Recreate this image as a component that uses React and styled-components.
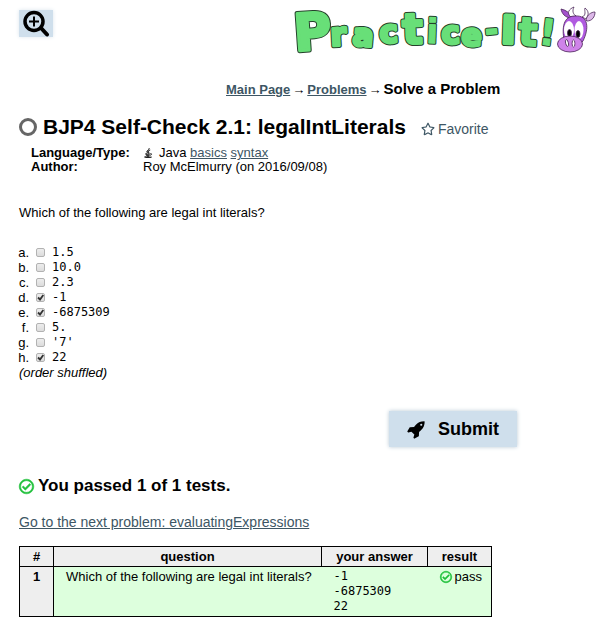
import React from "react";
import styled, { createGlobalStyle } from "styled-components";
import { FaRegStar, FaRegCheckCircle, FaJava } from "react-icons/fa";

const sans = `"Liberation Sans", Arial, sans-serif`;
const mono = `"DejaVu Sans Mono", monospace`;

const Global = createGlobalStyle`
  * { box-sizing: border-box; }
  body { margin: 0; background: #fff; color: #000; font: 13px/15px ${sans}; }
`;

const Page = styled.div`
  padding: 0 11px 20px 19px;
`;

const Header = styled.header`
  display: flex;
  justify-content: space-between;
  align-items: flex-start;
`;

const SearchButton = styled.button`
  display: flex;
  align-items: center;
  justify-content: center;
  width: 34px;
  height: 27px;
  margin-top: 10px;
  padding: 0;
  border: 0;
  background: #cfdfec;
  box-shadow: 0 0 4px #dce6ee;
`;

const Logo = styled.svg`
  display: block;
  width: 304px;
  height: 64px;
  flex: none;
  overflow: visible;
`;

const LogoText = styled.text`
  font: bold ${(p) => p.$size}px "DejaVu Sans", sans-serif;
  fill: #68df78;
  stroke: ${(p) => (p.$outline ? "#24402a" : "#68df78")};
  stroke-width: ${(p) => (p.$outline ? p.$fat + 2 : p.$fat)}px;
  stroke-linejoin: round;
`;

const Crumbs = styled.nav`
  display: flex;
  align-items: baseline;
  gap: 2px;
  margin: 16px 0 0 207px;
  line-height: 18px;
  font-weight: bold;
  white-space: nowrap;
`;

const Arrow = styled.span`
  font-weight: normal;
`;

const Current = styled.span`
  font-size: 15px;
`;

const Link = styled.a`
  color: #3d5664;
  text-decoration: underline;
  font-size: ${(p) => p.$size || "inherit"};
`;

const TitleRow = styled.div`
  display: flex;
  align-items: center;
  margin-top: 15px;
  white-space: nowrap;
`;

const Ring = styled.span`
  width: 18px;
  height: 18px;
  margin-right: 6px;
  border: 3px solid #666;
  border-radius: 50%;
`;

const Title = styled.h1`
  margin: 0;
  font-size: 21px;
  line-height: 26px;
`;

const Favorite = styled.button`
  display: flex;
  align-items: center;
  gap: 3px;
  margin: 4px 0 0 15px;
  padding: 0;
  border: 0;
  background: none;
  color: #3d5664;
  font: 14px/18px ${sans};
`;

const Facts = styled.dl`
  display: grid;
  grid-template-columns: 112px 1fr;
  line-height: 14px;
  margin: 6px 0 0 12px;
`;

const Term = styled.dt`
  font-weight: bold;
`;

const Fact = styled.dd`
  margin: 0;
  svg { margin-right: 6px; vertical-align: -1px; stroke: #000; stroke-width: 20px; }
`;

const Question = styled.p`
  margin: 31px 0 0;
`;

const Choices = styled.ul`
  margin: 25px 0 0;
  padding: 0;
  list-style: none;
`;

const Choice = styled.label`
  display: grid;
  grid-template-columns: 10px 9px 1fr;
  column-gap: 7px;
  align-items: center;
  height: 15px;
`;

const Letter = styled.span`
  justify-self: end;
  white-space: nowrap;
`;

const Box = styled.span`
  position: relative;
  display: block;
  width: 9px;
  height: 9px;
  svg { position: absolute; inset: 0; pointer-events: none; }
`;

const Tick = styled.input`
  appearance: none;
  display: block;
  width: 9px;
  height: 9px;
  margin: 0;
  border: 1px solid #b2b2b2;
  border-radius: 2px;
  background: linear-gradient(#ededed, #dcdcdc);
`;

const Code = styled.code`
  display: block;
  font: 12px/15px ${mono};
  white-space: pre;
`;

const Note = styled.p`
  margin: 0;
  font-style: italic;
`;

const Submit = styled.button`
  display: flex;
  align-items: center;
  justify-content: center;
  gap: 12px;
  width: 128px;
  height: 36px;
  margin: 31px 0 0 370px;
  padding: 0;
  border: 0;
  background: #cfdfec;
  box-shadow: 0 0 4px #b8c8d4;
  color: #000;
  font: bold 18px/20px ${sans};
`;

const Verdict = styled.h2`
  display: flex;
  align-items: center;
  gap: 4px;
  margin: 29px 0 0;
  font-size: 17px;
  line-height: 20px;
`;

const Check = styled(FaRegCheckCircle)`
  color: #1fc03a;
  stroke: #1fc03a;
  stroke-width: 20px;
  overflow: visible;
`;

const Next = styled.p`
  margin: 17px 0 0;
  line-height: 18px;
`;

const Results = styled.table`
  margin-top: 14px;
  border: 1px solid #000;
  border-collapse: collapse;
  line-height: 15px;
  background: #dfd;
`;

const Head = styled.th`
  min-width: ${(p) => p.$width}px;
  padding: 2px 0;
  border: 1px solid #000;
  background: #eee;
  vertical-align: top;
`;

const Cell = styled.td`
  padding: 2px 8px 2px 12px;
  vertical-align: top;
  white-space: nowrap;
`;

const Pass = styled.span`
  display: flex;
  align-items: center;
  gap: 3px;
`;

const choices = [
  ["a", "1.5"], ["b", "10.0"], ["c", "2.3"], ["d", "-1", true],
  ["e", "-6875309", true], ["f", "5."], ["g", "'7'"], ["h", "22", true],
];

// [character, x, baseline, size, tilt, thickness]
const letters = [
  ["P", 2, 51, 51, -4, 3], ["r", 38, 46, 32, -3, 3], ["a", 59, 45, 31, 5, 3],
  ["c", 87, 43, 31, -3, 3], ["t", 110, 44, 42, -2, 3], ["i", 133, 43, 34, 2, 1],
  ["c", 149, 44, 31, -3, 3], ["e", 168, 45, 30, 3, 3], ["-", 193, 41, 31, -5, 2],
  ["I", 208, 43, 38, 2, 4], ["t", 225, 45, 39, 3, 2], ["!", 245, 44, 36, 7, 1],
];

function PracticeLogo() {
  return (
    <Logo viewBox="0 0 304 64" role="img" aria-label="Practice-It!">
      {[true, false].map((outline) =>
        letters.map(([c, x, y, size, tilt, fat], i) => (
          <LogoText
            key={i + "-" + outline}
            x={x}
            y={y}
            $size={size}
            $fat={fat}
            $outline={outline}
            transform={`rotate(${tilt} ${x} ${y})`}
          >
            {c}
          </LogoText>
        ))
      )}
      <g stroke="#4a2458" strokeWidth="0.8" strokeLinejoin="round">
        <path fill="#a452cc" d="M277 18C272 17 269 14 268 9C273 10 277 13 279 17Z" />
        <path fill="#fff" d="M278 17C273 13 276 9 281 7C279 11 280 14 283 16Z" />
        <path fill="#fff" d="M289 17C294 15 291 11 292 8C296 11 296 15 293 19Z" />
        <path fill="#dcb8e8" d="M293 20C294 15 298 12 302 12C302 17 299 21 294 21Z" />
        <path fill="#b05ae0" d="M271 40C269 28 270 16 282 16C296 15 296 29 290 41C286 47 274 46 271 40Z" />
        <ellipse cx="276" cy="30" rx="5" ry="9" fill="#fff" stroke="none" />
        <ellipse cx="286" cy="30" rx="4.5" ry="9" fill="#fff" stroke="none" />
        <ellipse cx="276.5" cy="33" rx="2" ry="3.5" fill="#000" />
        <ellipse cx="285" cy="34" rx="2" ry="3.5" fill="#000" />
        <ellipse cx="277" cy="44" rx="12.5" ry="8" fill="#cf83e9" />
        <ellipse cx="274" cy="43" rx="1.4" ry="3.5" fill="#fff" transform="rotate(-14 274 43)" />
        <ellipse cx="280.5" cy="43.5" rx="1.4" ry="3.5" fill="#fff" />
      </g>
    </Logo>
  );
}

function Rocket() {
  return (
    <svg width="19" height="19" viewBox="0 0 1792 1792" fill="currentColor">
      <path d="M1440 448q0-40-28-68t-68-28-68 28-28 68 28 68 68 28 68-28 28-68zm224-288q0 249-75.500 430.500t-253.500 360.500q-81 80-195 176l-20 379q-2 16-16 26l-384 224q-7 4-16 4-12 0-23-9l-64-64q-13-14-8-32l85-276-281-281-276 85q-3 1-9 1-14 0-23-9l-64-64q-17-19-5-39l224-384q10-14 26-16l379-20q96-114 176-195 188-187 358-258t431-71q14 0 24 9.500t10 22.500z" />
    </svg>
  );
}

export default function App() {
  return (
    <>
      <Global />
      <Page>
        <Header>
          <SearchButton aria-label="Zoom in">
            <svg width="27" height="27" viewBox="0 0 27 27" fill="none" stroke="#000">
              <circle cx="11" cy="11.5" r="9" strokeWidth="3.5" />
              <path d="M18 18L24 24.500" strokeWidth="4" strokeLinecap="round" />
              <path d="M11 6.500V16.500M6 11.500H16" strokeWidth="2" />
            </svg>
          </SearchButton>
          <PracticeLogo />
        </Header>

        <Crumbs>
          <Link href="#main">Main Page</Link>
          <Arrow>→</Arrow>
          <Link href="#problems">Problems</Link>
          <Arrow>→</Arrow>
          <Current>Solve a Problem</Current>
        </Crumbs>

        <TitleRow>
          <Ring />
          <Title>BJP4 Self-Check 2.1: legalIntLiterals</Title>
          <Favorite><FaRegStar size={14} />Favorite</Favorite>
        </TitleRow>

        <Facts>
          <Term>Language/Type:</Term>
          <Fact><FaJava size={10} />Java <Link href="#basics">basics</Link> <Link href="#syntax">syntax</Link></Fact>
          <Term>Author:</Term>
          <Fact>Roy McElmurry (on 2016/09/08)</Fact>
        </Facts>

        <Question>Which of the following are legal int literals?</Question>

        <Choices>
          {choices.map(([letter, text, on]) => (
            <li key={letter}>
              <Choice>
                <Letter>{letter}.</Letter>
                <Box>
                  <Tick type="checkbox" defaultChecked={on} />
                  {on && (
                    <svg width="9" height="9" viewBox="0 0 9 9" fill="none" stroke="#333" strokeWidth="1.8">
                      <path d="M2 4.500L4 6.500L7.300 2" />
                    </svg>
                  )}
                </Box>
                <Code>{text}</Code>
              </Choice>
            </li>
          ))}
        </Choices>
        <Note>(order shuffled)</Note>

        <Submit><Rocket />Submit</Submit>

        <Verdict><Check size={15} />You passed 1 of 1 tests.</Verdict>
        <Next><Link href="#next" $size="14px">Go to the next problem: evaluatingExpressions</Link></Next>

        <Results>
          <thead>
            <tr>
              <Head $width={34}>#</Head>
              <Head $width={268}>question</Head>
              <Head $width={106}>your answer</Head>
              <Head $width={64}>result</Head>
            </tr>
          </thead>
          <tbody>
            <tr>
              <Head scope="row" $width={34}>1</Head>
              <Cell>Which of the following are legal int literals?</Cell>
              <Cell><Code>{"-1\n-6875309\n22"}</Code></Cell>
              <Cell><Pass><Check size={12} />pass</Pass></Cell>
            </tr>
          </tbody>
        </Results>
      </Page>
    </>
  );
}
